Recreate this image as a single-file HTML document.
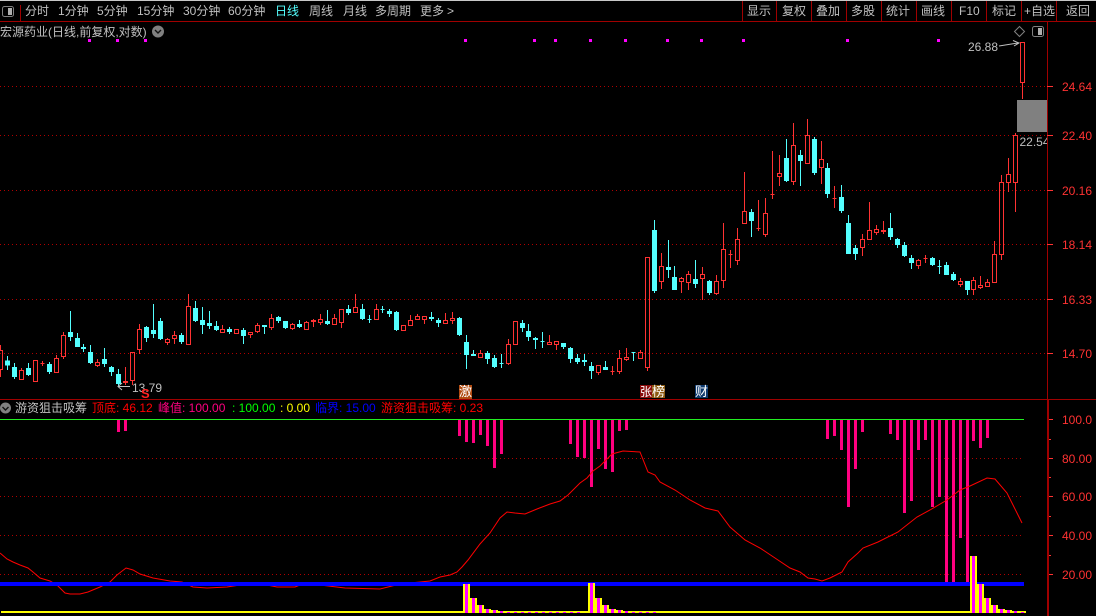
<!DOCTYPE html>
<html><head><meta charset="utf-8"><style>
html,body{margin:0;padding:0;background:#000;width:1096px;height:616px;overflow:hidden}
svg{display:block}
text{font-family:"Liberation Sans","WenQuanYi Zen Hei","Noto Sans CJK SC",sans-serif;font-size:12px}
.t text{fill:#c0c0c0}
.a text{fill:#ff3232}
</style></head><body>
<svg width="1096" height="616" viewBox="0 0 1096 616" xmlns="http://www.w3.org/2000/svg">
<rect width="1096" height="616" fill="#000"/>
<g shape-rendering="crispEdges">
<rect width="1096" height="1" fill="#c8c8c8"/>
<path d="M0 21.5H1096M20.5 5V21M742.5 1V21M776.5 1V21M811.5 1V21M846.5 1V21M881.5 1V21M916.5 1V21M951.5 1V21M986.5 1V21M1021.5 1V21M1056.5 1V21M1047.5 22V400M0 399.5H1096" stroke="#a00000" fill="none"/>
<path d="M1048 400V616" stroke="#a00000" stroke-width="2" fill="none"/>
<path d="M0 86.5H1047M0 135.5H1047M0 190.5H1047M0 244.5H1047M0 299.5H1047M0 353.5H1047M0 458.5H1024M0 496.5H1024M0 535.5H1024M0 574.5H1024" stroke="#b00000" stroke-dasharray="1 3" fill="none"/>
<path d="M1047 86.5H1053M1047 135.5H1053M1047 190.5H1053M1047 244.5H1053M1047 299.5H1053M1047 353.5H1053M1049 419.5H1053M1049 458.5H1053M1049 496.5H1053M1049 535.5H1053M1049 574.5H1053M1049 439.5H1051M1049 477.5H1051M1049 516.5H1051M1049 555.5H1051" stroke="#ff3232" fill="none"/>
<path fill="#ff00ff" d="M88 39h3v3h-3zM116 39h3v3h-3zM144 39h3v3h-3zM464 39h3v3h-3zM533 39h3v3h-3zM554 39h3v3h-3zM589 39h3v3h-3zM624 39h3v3h-3zM666 39h3v3h-3zM700 39h3v3h-3zM742 39h3v3h-3zM846 39h3v3h-3zM937 39h3v3h-3z"/>
<rect x="1017" y="100" width="30" height="32" fill="#808080"/>
<path fill="#54ffff" stroke="#54ffff" d="M7.5 356V370M5.500 361h4v4h-4zM14.5 363V379M12.5 367.5h4v9h-4zM28.5 363V376M26.5 368.5h4v6h-4zM49.5 362V374M47.5 364.5h4v7h-4zM70.5 311V341M68.5 332.5h4v4h-4zM77.5 333V347M75.5 338.5h4v8h-4zM83.5 344V352M81.5 347.5h4v1h-4zM90.5 345V364M88.5 352.5h4v10h-4zM104.5 348V367M102.5 359.5h4v4h-4zM111.5 366V376M109.5 367.5h4v4h-4zM118.5 369V386M116.5 374.5h4v9h-4zM146.5 326V342M144.5 327.5h4v10h-4zM153.5 304V338M151.5 330.5h4v3h-4zM160.5 318V340M158.5 321.5h4v17h-4zM181.5 333V344M179.5 335.5h4v6h-4zM195.5 301V322M193.5 308.5h4v12h-4zM202.5 307V334M200.5 320.5h4v4h-4zM209.5 311V329M207.5 323.5h4v2h-4zM216.5 321V331M214.5 326.5h4v3h-4zM229.5 327V334M227.5 329.5h4v2h-4zM243.5 328V344M241.5 330.5h4v5h-4zM264.5 325V334M262.5 325.5h4v1h-4zM278.5 316V323M276.5 317.5h4v3h-4zM285.5 321V329M283.5 321.5h4v6h-4zM299.5 320V328M297.5 324.5h4v2h-4zM327.5 310V325M325.5 321.5h4v2h-4zM348.5 305V315M346.5 309.5h4v3h-4zM362.5 304V320M360.5 309.5h4v9h-4zM369.5 315V323M367.5 319.5h4M382.5 306V313M380.5 309.5h4M389.5 309V317M387.5 311.5h4v2h-4zM396.5 311V331M394.5 312.5h4v17h-4zM431.5 312V321M429.5 317.5h4v1h-4zM438.5 318V327M436.5 320.5h4v2h-4zM459.5 317V336M457.5 318.5h4v16h-4zM466.5 335V369M464.5 342.5h4v12h-4zM473.5 350V356M471.5 354.5h4v1h-4zM487.5 351V364M485.5 353.5h4v5h-4zM494.5 355V368M492.5 358.5h4v8h-4zM501.5 354V368M499.5 363.5h4M522.5 320V332M520.5 323.5h4v4h-4zM528.5 324V341M526.5 331.5h4v5h-4zM535.5 337V349M533.5 338.5h4v1h-4zM542.5 332V348M540.5 341.5h4M563.5 343V349M561.5 343.5h4v3h-4zM570.5 347V363M568.5 348.5h4v10h-4zM577.5 354V364M575.5 358.5h4v3h-4zM584.5 354V366M582.5 360.5h4v1h-4zM591.5 362V379M589.5 366.5h4v4h-4zM605.5 361V370M603.5 367.5h4v2h-4zM633.5 352V361M631.5 352.5h4M654.5 220V293M652.5 230.5h4v60h-4zM668.5 240V278M666.5 267.5h4v2h-4zM674.5 266V290M672.5 277.5h4v12h-4zM695.5 260V288M693.5 279.5h4v4h-4zM709.5 280V295M707.5 281.5h4v11h-4zM751.5 209V237M749.5 212.5h4v8h-4zM786.5 139V182M784.5 158.5h4v22h-4zM800.5 150V186M798.5 155.5h4v5h-4zM814.5 137V175M812.5 139.5h4v33h-4zM827.5 163V198M825.5 168.5h4v25h-4zM841.5 185V213M839.5 197.5h4v13h-4zM848.5 215V254M846.5 223.5h4v30h-4zM855.5 245V260M853.5 248.5h4v5h-4zM890.5 213V240M888.5 228.5h4v8h-4zM897.5 238V248M895.5 239.5h4v5h-4zM904.5 242V257M902.5 245.5h4v10h-4zM911.5 255V269M909.5 258.5h4v4h-4zM932.5 257V266M930.5 258.5h4v6h-4zM939.5 260V274M937.5 266.5h4M946.5 262V275M944.5 265.5h4v9h-4zM953.5 272V281M951.5 274.5h4v5h-4zM967.5 281V295M965.5 281.5h4v8h-4z"/>
<path fill="none" stroke="#ff3232" d="M.5 345V350M-1.5 350.5h4v19h-4zM.5 370V377M21.5 368V370M19.5 370.5h4v9h-4zM33.5 360.5h4v21h-4zM42.5 361V366M40.5 363.5h4M56.5 355V358M54.5 358.5h4v14h-4zM63.5 332V335M61.5 335.5h4v21h-4zM63.5 357V359M97.5 359V362M95.5 362.5h4v3h-4zM97.5 366V367M125.5 367V381M123.5 381.5h4v1h-4zM125.5 383V385M130.5 352.5h4v28h-4zM132.5 381V385M139.5 324V329M137.5 329.5h4v20h-4zM139.5 350V354M167.5 338V339M165.5 339.5h4v3h-4zM167.5 343V345M174.5 331V335M172.5 335.5h4v3h-4zM174.5 339V344M188.5 294V306M186.5 306.5h4v38h-4zM222.5 325V329M220.5 329.5h4v3h-4zM234.5 329.5h4v4h-4zM248.5 332.5h4v2h-4zM250.5 335V338M257.5 323V325M255.5 325.5h4v6h-4zM257.5 332V333M271.5 314V318M269.5 318.5h4v9h-4zM271.5 328V330M292.5 323V324M290.5 324.5h4v4h-4zM292.5 329V330M306.5 321V322M304.5 322.5h4v7h-4zM313.5 319V320M311.5 320.5h4v1h-4zM313.5 322V327M320.5 314V319M318.5 319.5h4v3h-4zM320.5 323V325M334.5 314V318M332.5 318.5h4v6h-4zM341.5 323V328M339.5 309.5h4v13h-4zM355.5 294V307M353.5 307.5h4v5h-4zM376.5 304V309M374.5 309.5h4v10h-4zM401.5 325.5h4v5h-4zM410.5 315V320M408.5 320.5h4v5h-4zM417.5 314V316M415.5 316.5h4v3h-4zM422.5 316.5h4v3h-4zM424.5 320V324M445.5 313V320M443.5 320.5h4v3h-4zM452.5 312V318M450.5 318.5h4v2h-4zM452.5 321V324M480.5 350V353M478.5 353.5h4v4h-4zM508.5 339V344M506.5 344.5h4v19h-4zM508.5 364V365M513.5 321.5h4v23h-4zM549.5 335V342M547.5 342.5h4v2h-4zM554.5 341.5h4v3h-4zM556.5 345V350M596.5 365.5h4v7h-4zM598.5 373V375M612.5 366V375M610.5 371.5h4M619.5 350V358M617.5 358.5h4v13h-4zM619.5 372V374M626.5 348V357M624.5 357.5h4v2h-4zM626.5 360V361M640.5 350V352M638.5 352.5h4v6h-4zM645.5 257.5h4v110h-4zM647.5 368V371M661.5 253V266M659.5 266.5h4v15h-4zM661.5 282V289M681.5 277V278M679.5 278.5h4v3h-4zM681.5 282V293M688.5 271V274M686.5 274.5h4v8h-4zM688.5 283V290M702.5 267V274M700.5 274.5h4v4h-4zM702.5 279V300M716.5 275V281M714.5 281.5h4v12h-4zM716.5 294V295M723.5 223V249M721.5 249.5h4v31h-4zM723.5 281V288M730.5 250V268M728.5 254.5h4M737.5 228V239M735.5 239.5h4v21h-4zM737.5 261V265M744.5 172V211M742.5 211.5h4v12h-4zM758.5 200V231M756.5 228.5h4M765.5 198V213M763.5 213.5h4v21h-4zM765.5 235V237M772.5 151V199M770.5 194.5h4M779.5 155V173M777.5 173.5h4v3h-4zM779.5 177V186M793.5 123V145M791.5 145.5h4v36h-4zM793.5 182V185M807.5 119V135M805.5 135.5h4v28h-4zM821.5 141V159M819.5 159.5h4v8h-4zM821.5 168V184M834.5 186V208M832.5 198.5h4M862.5 234V239M860.5 239.5h4v8h-4zM862.5 248V256M869.5 202V230M867.5 230.5h4v9h-4zM876.5 225V229M874.5 229.5h4v3h-4zM876.5 233V235M883.5 221V234M881.5 230.5h4v1h-4zM918.5 259V260M916.5 260.5h4v5h-4zM918.5 266V269M925.5 255V263M923.5 258.5h4M960.5 278V281M958.5 281.5h4v3h-4zM960.5 285V287M973.5 277V280M971.5 280.5h4v9h-4zM973.5 290V295M980.5 276V285M978.5 285.5h4v2h-4zM980.5 288V289M987.5 279V282M985.5 282.5h4v4h-4zM994.5 241V254M992.5 254.5h4v28h-4zM1001.5 175V182M999.5 182.5h4v72h-4zM1001.5 255V260M1008.5 158V174M1006.5 174.5h4v8h-4zM1008.5 183V192M1015.5 133V135M1013.5 135.5h4v47h-4zM1015.5 183V212M1020.5 42.5h4v40h-4zM1022.5 83V99"/>
<path fill="#ff0080" d="M117 420h3v12h-3zM124 420h3v11h-3zM458 420h3v16h-3zM465 420h3v22h-3zM472 420h3v23h-3zM479 420h3v15h-3zM486 420h3v26h-3zM493 420h3v48h-3zM500 420h3v34h-3zM569 420h3v24h-3zM576 420h3v37h-3zM583 420h3v38h-3zM590 420h3v67h-3zM597 420h3v29h-3zM604 420h3v49h-3zM611 420h3v52h-3zM618 420h3v11h-3zM625 420h3v10h-3zM826 420h3v19h-3zM833 420h3v16h-3zM840 420h3v30h-3zM847 420h3v87h-3zM854 420h3v49h-3zM861 420h3v12h-3zM889 420h3v14h-3zM896 420h3v20h-3zM903 420h3v93h-3zM910 420h3v81h-3zM917 420h3v30h-3zM924 420h3v20h-3zM931 420h3v87h-3zM938 420h3v77h-3zM945 420h3v162h-3zM952 420h3v162h-3zM959 420h3v118h-3zM966 420h3v162h-3zM972 420h3v21h-3zM979 420h3v28h-3zM986 420h3v18h-3z"/>
<rect x="0" y="419" width="1024" height="1" fill="#22ee22"/>
</g>
<polyline fill="none" stroke="#ff0000" stroke-width="1" points="0,553 7,559 13,562 20,565 28,568 33,572 40,578 50,581 57,585 65,593 70,594 80,594 88,592 100,587 110,582 117,575 126,568 133,570 140,574 153,578 170,581 182,582 193,587 207,588 227,587 240,585 267,585 277,587 295,587 300,585 320,585 345,588 380,589 400,584 430,581 440,577 450,575 457,572 462,567 468,560 480,544 490,533 500,518 507,512 515,513 525,514 537,509 550,504 560,501 568,495 580,483 587,478 593,471 600,466 612,454 623,451 640,452 648,472 655,475 660,482 675,490 690,500 705,508 718,511 730,527 745,540 760,548 775,558 790,568 800,572 808,578 815,579 822,581 830,578 842,572 848,562 858,553 863,548 878,542 890,536 898,532 917,517 930,510 947,500 960,490 970,486 987,478 995,479 1007,493 1013,505 1022,523"/>
<g shape-rendering="crispEdges">
<rect x="0" y="582" width="1024" height="4" fill="#0000ff"/>
<rect x="1" y="611" width="1025" height="2" fill="#ffff00"/>
<path fill="#ffff00" d="M463 584h7v27h-7zM470 598h7v13h-7zM477 605h7v6h-7zM484 609h7v2h-7zM491 610h7v1h-7zM588 583h7v28h-7zM595 598h7v13h-7zM602 605h7v6h-7zM609 609h7v2h-7zM616 610h7v1h-7zM970 556h7v55h-7zM977 584h7v27h-7zM984 598h7v13h-7zM991 605h7v6h-7zM998 609h7v2h-7zM1005 610h7v1h-7z"/>
<path fill="#ff00ff" d="M465 584h3v29h-3zM472 598h3v15h-3zM479 605h3v8h-3zM486 609h3v4h-3zM493 610h3v3h-3zM500 611h3v2h-3zM507 612h3v1h-3zM514 612h3v1h-3zM521 612h3v1h-3zM528 612h3v1h-3zM535 612h3v1h-3zM542 612h3v1h-3zM549 612h3v1h-3zM556 612h3v1h-3zM563 612h3v1h-3zM570 612h3v1h-3zM577 612h3v1h-3zM590 583h3v30h-3zM597 598h3v15h-3zM604 605h3v8h-3zM611 609h3v4h-3zM618 610h3v3h-3zM625 611h3v2h-3zM632 612h3v1h-3zM639 612h3v1h-3zM646 612h3v1h-3zM653 612h3v1h-3zM972 556h3v57h-3zM979 584h3v29h-3zM986 598h3v15h-3zM993 605h3v8h-3zM1000 609h3v4h-3zM1007 610h3v3h-3zM1014 611h3v2h-3zM1021 612h3v1h-3z"/>
<rect x="459" y="385" width="13" height="14" fill="#b04a10"/>
<rect x="640" y="385" width="12" height="13" fill="#8a0c0c"/>
<rect x="652" y="385" width="13" height="13" fill="#8c5a10"/>
<rect x="695" y="385" width="13" height="13" fill="#0e3a6e"/>
</g>
<rect x="2.500" y="6.500" width="11" height="10" rx="2" fill="none" stroke="#808080"/>
<rect x="8" y="8" width="4" height="7" fill="#b0b0b0"/>
<rect x="1032.500" y="26.500" width="11" height="10" rx="2" fill="none" stroke="#808080"/>
<rect x="1038" y="28" width="4" height="7" fill="#b0b0b0"/>
<path d="M1019.500 26.500l5 5-5 5-5-5z" fill="none" stroke="#808080"/>
<circle cx="158" cy="31.500" r="6" fill="#808080"/>
<path d="M155 30l3 3 3-3" fill="none" stroke="#111" stroke-width="1.400"/>
<circle cx="5.500" cy="408" r="5.500" fill="#808080"/>
<path d="M2.500 407l3 3 3-3" fill="none" stroke="#111" stroke-width="1.400"/>
<path d="M999 46L1018 43M1013 40.500L1019 43L1014 46" fill="none" stroke="#c0c0c0"/>
<path d="M118 386.500H130M122 383L118 386.500L122 390" fill="none" stroke="#c0c0c0"/>
<g class="t">
<text x="25" y="15">分时</text>
<text x="58" y="15">1分钟</text>
<text x="97" y="15">5分钟</text>
<text x="137" y="15">15分钟</text>
<text x="183" y="15">30分钟</text>
<text x="228" y="15">60分钟</text>
<text x="275" y="15" style="fill:#54ffff">日线</text>
<text x="309" y="15">周线</text>
<text x="343" y="15">月线</text>
<text x="375" y="15">多周期</text>
<text x="420" y="15">更多</text>
<text x="447" y="15">&gt;</text>
<text x="747" y="15">显示</text>
<text x="782" y="15">复权</text>
<text x="816" y="15">叠加</text>
<text x="851" y="15">多股</text>
<text x="886" y="15">统计</text>
<text x="921" y="15">画线</text>
<text x="959" y="15">F10</text>
<text x="992" y="15">标记</text>
<text x="1024" y="15">+自选</text>
<text x="1066" y="15">返回</text>
<text x="0" y="36">宏源药业(日线,前复权,对数)</text>
<text x="968" y="51">26.88</text>
<text x="132" y="392">13.79</text>
<text x="15" y="412">游资狙击吸筹</text>
</g>
<svg x="1019" y="130" width="28" height="24" viewBox="0 0 28 24"><text x="0.500" y="16" fill="#c0c0c0">22.54</text></svg>
<text x="141" y="398" style="fill:#ff2020;font-weight:bold;font-size:13px">S</text>
<text x="459" y="396" style="fill:#fff;font-size:13px">激</text>
<text x="640" y="396" style="fill:#fff;font-size:12px">张</text>
<text x="652" y="396" style="fill:#fff;font-size:13px">榜</text>
<text x="695" y="396" style="fill:#fff;font-size:13px">财</text>
<g class="a">
<text x="1062" y="91">24.64</text>
<text x="1062" y="140">22.40</text>
<text x="1062" y="195">20.16</text>
<text x="1062" y="249">18.14</text>
<text x="1062" y="304">16.33</text>
<text x="1062" y="358">14.70</text>
<text x="1062" y="424">100.0</text>
<text x="1062" y="463">80.00</text>
<text x="1062" y="501">60.00</text>
<text x="1062" y="540">40.00</text>
<text x="1062" y="579">20.00</text>
</g>
<text x="92" y="412" fill="#ff0000">顶底: 46.12</text>
<text x="158" y="412" fill="#ff0080">峰值: 100.00</text>
<text x="232" y="412" fill="#00ff00">: 100.00</text>
<text x="280" y="412" fill="#ffff00">: 0.00</text>
<text x="315" y="412" fill="#0000ff">临界: 15.00</text>
<text x="381" y="412" fill="#ff0000">游资狙击吸筹: 0.23</text>
</svg>
</body></html>
